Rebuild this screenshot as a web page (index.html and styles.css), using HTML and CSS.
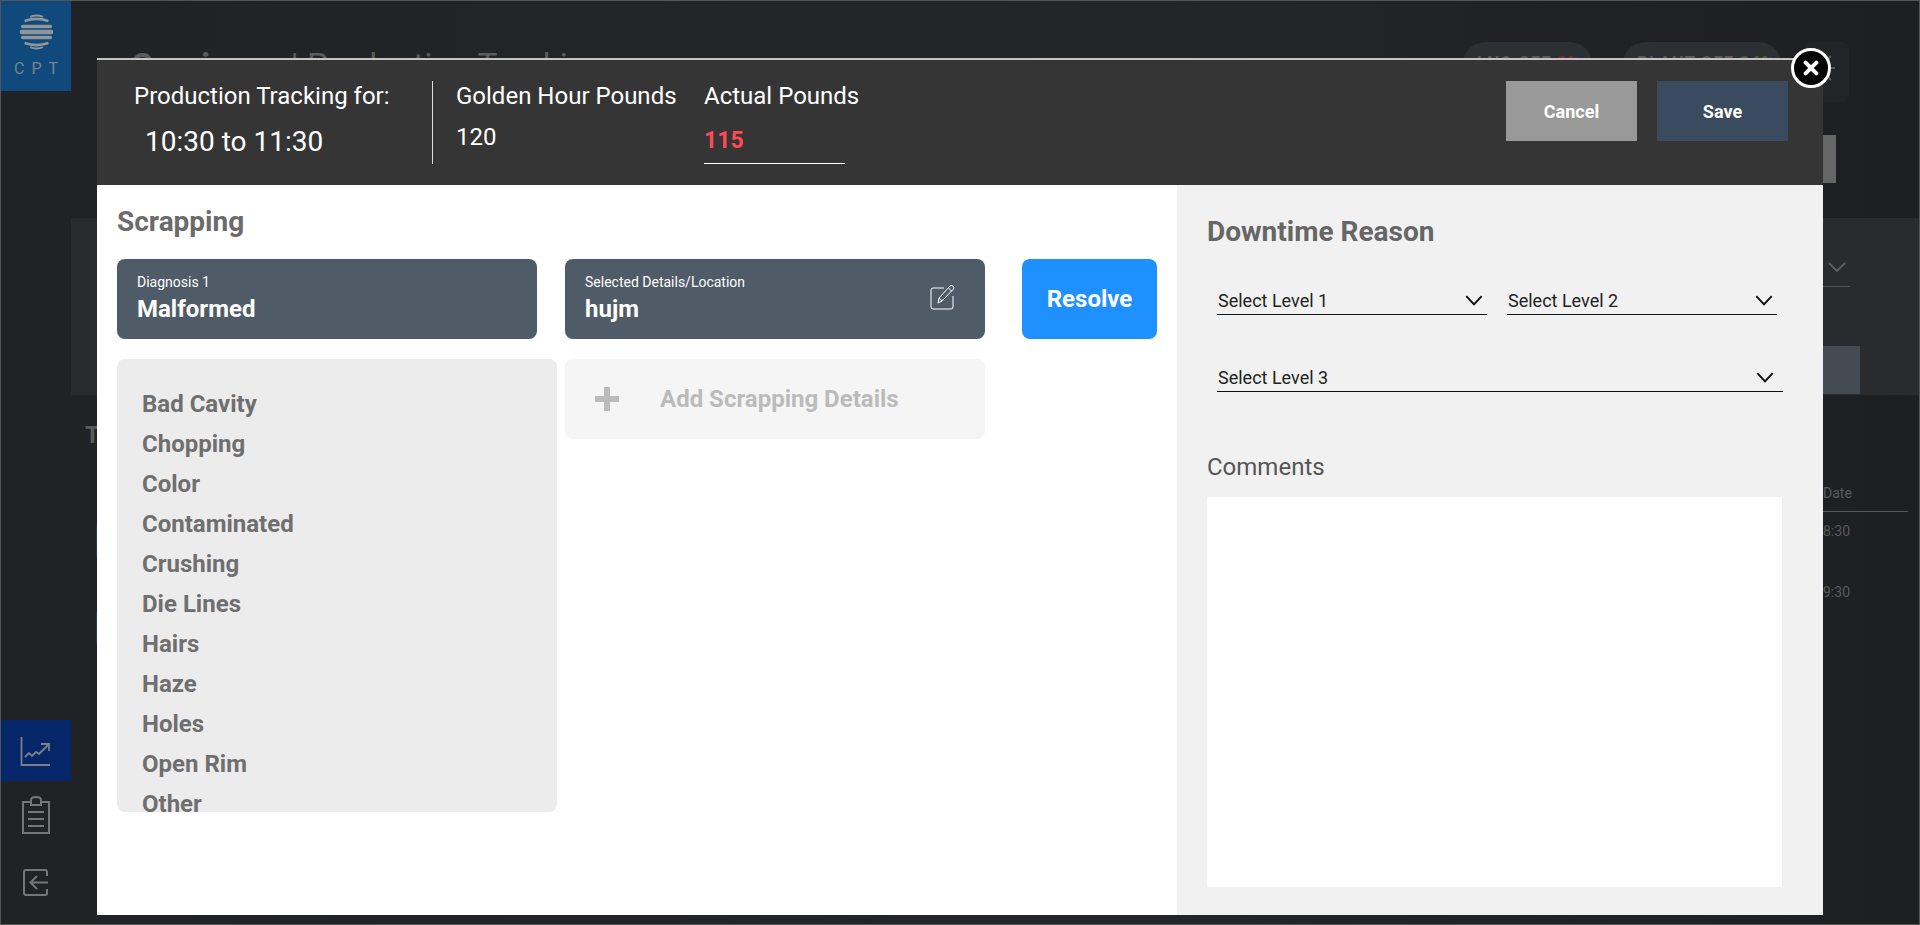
FILE: index.html
```html
<!DOCTYPE html>
<html lang="en">
<head>
  <meta charset="UTF-8" />
  <title>Production Tracking</title>
  <link rel="stylesheet" href="styles.css">
</head>
<body>

  <div class="app">
    <aside class="sidebar">
      <div class="logo">
        <svg width="33" height="36" viewBox="0 0 36 38" fill="none" stroke="#8f979d">
          <path d="M11 2.5 Q18 -0.5 25 2.5" stroke-width="2"/>
          <path d="M5 7 Q18 2.5 31 7" stroke-width="3"/>
          <path d="M3 13 H33" stroke-width="4" stroke-linecap="round"/>
          <path d="M2 19 H34" stroke-width="5" stroke-linecap="round"/>
          <path d="M3 25 H33" stroke-width="4" stroke-linecap="round"/>
          <path d="M5 31 Q18 35.5 31 31" stroke-width="3"/>
          <path d="M11 35.5 Q18 38.5 25 35.5" stroke-width="2"/>
        </svg>
        <span class="logo-text">CPT</span>
      </div>
      <div class="side-spacer"></div>
      <a class="side-item active">
        <svg width="32" height="32" viewBox="0 0 32 32" fill="none" stroke="#7b7f88" stroke-width="1.8">
          <path d="M1.5 2 V30 H30"/>
          <path d="M5 22 L9 18 L12 21 L16 17 L19 19 L28 10"/>
          <path d="M21 9 H29 V16"/>
        </svg>
      </a>
      <a class="side-item">
        <svg width="30" height="38" viewBox="0 0 30 38" fill="none" stroke="#74767a" stroke-width="2">
          <path d="M10 6 H2 V37 H28 V6 H20"/>
          <path d="M10 9 V4 Q10 1 15 1 Q20 1 20 4 V9 Z"/>
          <path d="M7 16 H23 M7 23 H23 M7 30 H23"/>
        </svg>
      </a>
      <a class="side-item">
        <svg width="28" height="28" viewBox="0 0 28 28" fill="none" stroke="#74767a" stroke-width="2">
          <path d="M25 7 V3 Q25 1 23 1 H4 Q2 1 2 3 V24 Q2 26 4 26 H23 Q25 26 25 24 V20"/>
          <path d="M26 13.5 H9 M15 7 L8.5 13.5 L15 20"/>
        </svg>
      </a>
    </aside>

    <main class="page">
      <div class="page-head">
        <div class="head-top">
          <h1 class="page-title"><b>Corsicana</b> | Production Tracking</h1>
          <span class="page-sub">HH:MM</span>
          <span class="pill pill-lno">LNO OFF <b class="red">0%</b></span>
          <span class="pill pill-plant">PLANT OFF <b class="green">84%</b></span>
          <span class="gear">
            <svg width="30" height="30" viewBox="0 0 30 30" fill="none" stroke="#55575a" stroke-width="2"><path d="M20 8 L25 3 M21 15 H29 M20 22 L25 27"/></svg>
          </span>
        </div>
        <div class="head-action"></div>
      </div>
      <div class="band">
        <div class="band-filter">
          <svg width="18" height="10" viewBox="0 0 18 10" fill="none" stroke="#5c5e62" stroke-width="1.8"><path d="M1 1 L9 9 L17 1"/></svg>
        </div>
        <div class="band-block"></div>
      </div>
      <div class="page-table">
        <div class="table-left">
          <h2 class="table-title">T</h2>
          <div class="row-mark"></div>
          <div class="row-mark"></div>
        </div>
        <div class="table-date">
          <div class="date-head">Date</div>
          <div class="date-cell">8:30</div>
          <div class="date-cell">9:30</div>
        </div>
      </div>
    </main>
  </div>

  <div class="modal">
    <header class="modal-head">
      <div class="head-time">
        <div class="head-label">Production Tracking for:</div>
        <div class="time-range">10:30 to 11:30</div>
      </div>
      <div class="head-golden">
        <div class="head-label">Golden Hour Pounds</div>
        <div class="golden-value">120</div>
      </div>
      <div class="head-actual">
        <div class="head-label">Actual Pounds</div>
        <div class="actual-value">115</div>
      </div>
      <div class="head-buttons">
        <button class="btn btn-cancel">Cancel</button>
        <button class="btn btn-save">Save</button>
      </div>
    </header>

    <div class="modal-body">
      <section class="scrap">
        <h2 class="scrap-title">Scrapping</h2>
        <div class="scrap-cols">
          <div class="col-diagnosis">
            <div class="pick-card">
              <div class="pick-label">Diagnosis 1</div>
              <div class="pick-value">Malformed</div>
            </div>
            <ul class="reason-list">
              <li>Bad Cavity</li>
              <li>Chopping</li>
              <li>Color</li>
              <li>Contaminated</li>
              <li>Crushing</li>
              <li>Die Lines</li>
              <li>Hairs</li>
              <li>Haze</li>
              <li>Holes</li>
              <li>Open Rim</li>
              <li>Other</li>
            </ul>
          </div>
          <div class="col-details">
            <div class="pick-card pick-edit">
              <div>
                <div class="pick-label">Selected Details/Location</div>
                <div class="pick-value">hujm</div>
              </div>
              <svg class="edit-icon" width="25" height="26" viewBox="0 0 25 26" fill="none" stroke="#fff" stroke-width="1">
                <path d="M14 4 H3 Q1 4 1 6 V23 Q1 25 3 25 H21 Q23 25 23 23 V12"/>
                <path d="M8 19 L9 14 L20 2 Q21.5 1 23 2 Q24.5 3.5 23.5 5 L12 17 Z"/>
                <path d="M18.5 4 L22 7.500 M9 14 L12 17"/>
              </svg>
            </div>
            <div class="add-card">
              <span class="add-plus"></span>
              <span class="add-text">Add Scrapping Details</span>
            </div>
          </div>
          <button class="btn-resolve">Resolve</button>
        </div>
      </section>

      <section class="downtime">
        <h2 class="downtime-title">Downtime Reason</h2>
        <div class="select-row">
          <div class="level-select">
            <span>Select Level 1</span>
            <svg width="18" height="11" viewBox="0 0 16 10" fill="none" stroke="#111" stroke-width="1.8"><path d="M1 1 L8 8.500 L15 1"/></svg>
          </div>
          <div class="level-select">
            <span>Select Level 2</span>
            <svg width="18" height="11" viewBox="0 0 16 10" fill="none" stroke="#111" stroke-width="1.8"><path d="M1 1 L8 8.500 L15 1"/></svg>
          </div>
        </div>
        <div class="select-row">
          <div class="level-select level-wide">
            <span>Select Level 3</span>
            <svg width="18" height="11" viewBox="0 0 16 10" fill="none" stroke="#111" stroke-width="1.8"><path d="M1 1 L8 8.500 L15 1"/></svg>
          </div>
        </div>
        <div class="comments-label">Comments</div>
        <div class="comments-box"></div>
      </section>
    </div>

    <button class="modal-close">
      <svg width="16" height="16" viewBox="0 0 18 18" fill="none" stroke="#fff" stroke-width="4.500" stroke-linecap="round"><path d="M3 3 L15 15 M15 3 L3 15"/></svg>
    </button>
  </div>

</body>
</html>
```

FILE: styles.css
```css
* {
  box-sizing: border-box;
}
html, body {
  margin: 0;
  padding: 0;
  height: 100%;
  overflow: hidden;
}
body {
  font-family: Roboto, Arial, sans-serif;
  background: #212226;
}

/* dimmed page behind the modal */
.app {
  display: flex;
  height: 925px;
  border: 1px solid #555;
  background: linear-gradient(90deg, #212226 0%, #242528 60%, #1e1f23 100%);
}
.sidebar {
  width: 70px;
  flex: none;
  display: flex;
  flex-direction: column;
  align-items: stretch;
}
.logo {
  height: 90px;
  background: #10497c;
  display: flex;
  flex-direction: column;
  align-items: center;
  padding-top: 13px;
}
.logo-text {
  margin-top: 9px;
  padding-left: 7px;
  font-size: 16px;
  letter-spacing: 7px;
  color: #75858f;
}
.side-spacer {
  height: 629px;
}
.side-item {
  display: flex;
  align-items: center;
  justify-content: center;
  height: 61px;
}
.side-item + .side-item {
  height: 68px;
}
.side-item.active {
  background: #06266a;
}

.page {
  flex: 1;
  min-width: 0;
}
.page-head {
  height: 217px;
  padding: 41px 0 0 60px;
  color: #5a5b5e;
}
.head-top {
  display: flex;
  align-items: flex-start;
}
.page-title {
  margin: 4px 0 0;
  font-size: 33.500px;
  font-weight: 400;
  white-space: nowrap;
}
.page-sub {
  margin: 15px 0 0 24px;
  font-size: 14px;
  letter-spacing: 1px;
}
.pill {
  height: 60px;
  border-radius: 22px;
  background: #2c2f33;
  padding: 10px 0 0 14px;
  font-size: 17px;
  font-weight: 700;
  letter-spacing: 1px;
  white-space: nowrap;
}
.pill-lno {
  width: 129px;
  margin-left: auto;
}
.pill-plant {
  width: 158px;
  margin-left: 31px;
}
.gear {
  width: 43px;
  height: 60px;
  margin-left: 25px;
  margin-right: 70px;
  padding-top: 11px;
  border-radius: 6px;
  background: #232427;
}
.red {
  color: #7b2a2e;
}
.green {
  color: #47623a;
}
.head-action {
  width: 100px;
  height: 48px;
  margin: 33px 83px 0 auto;
  background: #666;
}
.band {
  height: 177px;
  background: #2a2b2f;
  display: flex;
  flex-direction: column;
  align-items: flex-end;
}
.band-filter {
  width: 120px;
  height: 69px;
  margin-right: 69px;
  padding: 39px 0 0 98px;
  border-bottom: 1px solid #55575a;
}
.band-block {
  width: 200px;
  height: 48px;
  margin-top: 59px;
  margin-right: 59px;
  background: #454b52;
}
.page-table {
  display: flex;
  justify-content: space-between;
  color: #5a5b5e;
}
.table-left {
  padding-left: 14px;
}
.table-title {
  margin: 26px 0 0;
  font-size: 24px;
  line-height: 28px;
}
.row-mark {
  width: 2px;
  height: 32px;
  margin: 76px 0 -21px 11px;
  background: #1c3a55;
}
.table-date {
  width: 100px;
  margin-right: 11px;
  padding-top: 90px;
  font-size: 14px;
}
.date-head {
  height: 27px;
  border-bottom: 1px solid #55575a;
  padding-left: 15px;
}
.date-cell {
  height: 61px;
  padding: 11px 0 0 15px;
}

/* modal */
.modal {
  position: absolute;
  left: 97px;
  top: 58px;
  width: 1726px;
  height: 857px;
  background: #fff;
}
.modal-head {
  height: 127px;
  background: #353535;
  border-top: 2px solid #c4c4c4;
  display: flex;
  color: #fff;
  padding-top: 21px;
}
.head-label {
  font-size: 24px;
  line-height: 30px;
  white-space: nowrap;
}
.head-time {
  width: 336px;
  height: 83px;
  padding-left: 37px;
  border-right: 1px solid #ddd;
}
.time-range {
  font-size: 28px;
  line-height: 32px;
  margin: 15px 0 0 11px;
}
.head-golden {
  width: 248px;
  margin-left: 23px;
}
.golden-value {
  font-size: 24px;
  line-height: 30px;
  margin-top: 11px;
}
.head-actual {
  width: 141px;
  height: 83px;
  border-bottom: 1px solid #fff;
}
.actual-value {
  font-size: 23px;
  font-weight: 700;
  line-height: 30px;
  margin-top: 15px;
  color: #ff4a55;
}
.head-buttons {
  margin-left: auto;
  display: flex;
  gap: 20px;
  padding-right: 35px;
}
.btn {
  width: 131px;
  height: 60px;
  border: none;
  color: #fff;
  font-family: Roboto, Arial, sans-serif;
  font-size: 18px;
  font-weight: 700;
}
.btn-cancel {
  background: #999;
}
.btn-save {
  background: #3a4a5f;
}
.modal-close {
  position: absolute;
  left: 1694px;
  top: -10px;
  width: 40px;
  height: 40px;
  border-radius: 50%;
  border: 3px solid #fff;
  background: #050505;
  padding: 0;
  display: flex;
  align-items: center;
  justify-content: center;
}

.modal-body {
  display: flex;
  height: 730px;
}
.scrap {
  width: 1080px;
  padding: 0 20px;
}
.scrap-title {
  margin: 0;
  height: 74px;
  padding-top: 20px;
  font-size: 28px;
  line-height: 34px;
  font-weight: 700;
  color: #6b6b6b;
}
.scrap-cols {
  display: flex;
}
.col-diagnosis {
  width: 440px;
}
.col-details {
  width: 420px;
  margin-left: 8px;
}
.pick-card {
  width: 420px;
  height: 80px;
  border-radius: 8px;
  background: #4f5b66;
  color: #fff;
  padding: 15px 20px;
}
.pick-edit {
  display: flex;
  justify-content: space-between;
  align-items: flex-start;
}
.edit-icon {
  margin: 10px 10px 0 0;
}
.pick-label {
  font-size: 14px;
  line-height: 16px;
  white-space: nowrap;
}
.pick-value {
  font-size: 24px;
  font-weight: 700;
  line-height: 30px;
  margin-top: 4px;
}
.reason-list {
  list-style: none;
  margin: 20px 0 0;
  padding: 25px 0 0 25px;
  height: 453px;
  overflow: hidden;
  background: #ececec;
  border-radius: 8px;
}
.reason-list li {
  height: 40px;
  line-height: 40px;
  font-size: 24px;
  font-weight: 700;
  color: #6f6f6f;
}
.add-card {
  height: 80px;
  margin-top: 20px;
  border-radius: 8px;
  background: #f5f5f5;
  display: flex;
  align-items: center;
  padding-left: 30px;
}
.add-plus {
  width: 24px;
  height: 24px;
  background:
    linear-gradient(#bbb, #bbb) center / 24px 6px no-repeat,
    linear-gradient(#bbb, #bbb) center / 6px 24px no-repeat;
}
.add-text {
  margin-left: 41px;
  font-size: 24px;
  font-weight: 700;
  color: #bbb;
}
.btn-resolve {
  width: 135px;
  height: 80px;
  margin-left: 37px;
  border: none;
  border-radius: 8px;
  background: #1e90ff;
  color: #fff;
  font-family: Roboto, Arial, sans-serif;
  font-size: 24px;
  font-weight: 700;
}

.downtime {
  width: 646px;
  background: #f1f1f1;
  padding: 0 40px 0 30px;
}
.downtime-title {
  margin: 0;
  height: 103px;
  padding-top: 30px;
  font-size: 28px;
  line-height: 34px;
  font-weight: 700;
  color: #666;
}
.select-row {
  display: flex;
  gap: 20px;
  padding-left: 10px;
  margin-bottom: 50px;
}
.level-select {
  width: 270px;
  height: 27px;
  display: flex;
  justify-content: space-between;
  align-items: center;
  padding: 0 4px 2px 1px;
  border-bottom: 1px solid #111;
  font-size: 18px;
  color: #222;
}
.level-wide {
  width: 566px;
  padding-right: 9px;
}
.comments-label {
  margin-top: 60px;
  font-size: 24px;
  line-height: 30px;
  color: #555;
}
.comments-box {
  width: 575px;
  height: 390px;
  margin-top: 15px;
  background: #fff;
}
```
